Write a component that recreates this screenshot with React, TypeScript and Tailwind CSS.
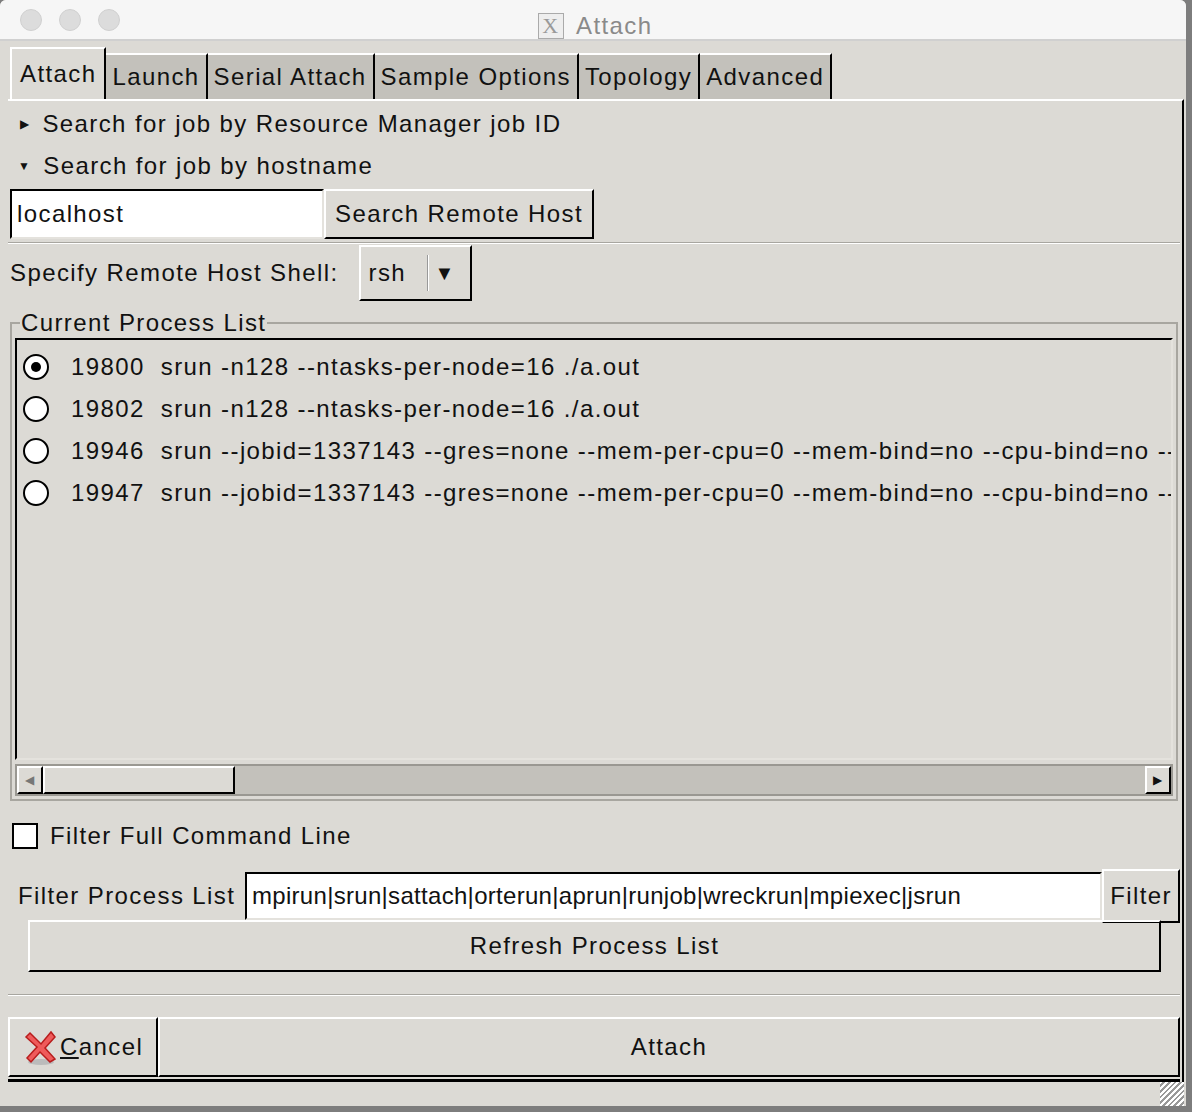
import React from 'react';

const font = { fontFamily: '"Liberation Sans", Arial, sans-serif', letterSpacing: '1.4px' };

const raised = 'border-t-2 border-l-2 border-t-white border-l-white border-b-2 border-r-2 border-b-black border-r-black';
const sunken = 'border-t-2 border-l-2 border-t-black border-l-black border-b-2 border-r-2 border-b-[#e4e2dd] border-r-[#e4e2dd]';

const Tab = ({ label, active }: { label: string; active?: boolean }) => (
  <div
    className={
      active
        ? 'h-[52px] px-2 flex items-center bg-[#dcdad5] border-t-2 border-l-2 border-white border-r-2 border-r-black'
        : 'h-[46px] px-[6px] flex items-center bg-[#c3c1bb] border-t-2 border-white border-r-2 border-r-black self-end'
    }
  >
    {label}
  </div>
);

const rows = [
  ['19800', 'srun -n128 --ntasks-per-node=16 ./a.out', true],
  ['19802', 'srun -n128 --ntasks-per-node=16 ./a.out', false],
  ['19946', 'srun --jobid=1337143 --gres=none --mem-per-cpu=0 --mem-bind=no --cpu-bind=no --cpu-freq=', false],
  ['19947', 'srun --jobid=1337143 --gres=none --mem-per-cpu=0 --mem-bind=no --cpu-bind=no --cpu-freq=', false],
] as const;

export default function App() {
  return (
    <div className="w-[1192px] h-[1112px] bg-[#7d7d7d] text-[24px] text-[#111] overflow-hidden" style={font}>
      <div className="w-[1186px] h-[1106px] bg-[#dcdad5] rounded-t-[6px] overflow-hidden flex flex-col">
        {/* title bar */}
        <div className="h-[46px] bg-[#f6f6f6] border-b-2 border-[#d0d0d0] flex items-center relative">
          <div className="flex gap-[17px] pl-[20px]">
            <span className="w-[22px] h-[22px] rounded-full bg-[#dcdcdc] border border-[#d0d0d0]" />
            <span className="w-[22px] h-[22px] rounded-full bg-[#dcdcdc] border border-[#d0d0d0]" />
            <span className="w-[22px] h-[22px] rounded-full bg-[#dcdcdc] border border-[#d0d0d0]" />
          </div>
          <div className="absolute left-[538px] top-[8px] flex items-center gap-[12px] text-[#8a8a8a]">
            <span className="w-[26px] h-[26px] border border-[#aaa] bg-[#eee] flex items-center justify-center text-[22px] text-[#999] leading-none" style={{ fontFamily: '"Liberation Serif", serif' }}>X</span>
            <span>Attach</span>
          </div>
        </div>

        <div className="flex-1 flex flex-col pl-[8px] pr-[2px] pt-[6px]">
          {/* tabs */}
          <div className="flex h-[52px] items-end pl-[2px]">
            <Tab label="Attach" active />
            <Tab label="Launch" />
            <Tab label="Serial Attach" />
            <Tab label="Sample Options" />
            <Tab label="Topology" />
            <Tab label="Advanced" />
          </div>

          <div className="border-t-2 border-white border-r-2 border-r-black flex flex-col pr-[2px]">
            <div className="h-[42px] flex items-center pl-[12px] gap-[12px] mt-[2px]">
              <span className="text-[12px]">▶</span>
              <span>Search for job by Resource Manager job ID</span>
            </div>
            <div className="h-[42px] flex items-center pl-[10px] gap-[12px]">
              <span className="text-[12px]">▼</span>
              <span>Search for job by hostname</span>
            </div>
            <div className="flex h-[50px] pl-[2px] mt-[2px]">
              <div className={`w-[314px] bg-white ${sunken} flex items-center pl-[5px]`}>localhost</div>
              <div className={`w-[270px] ${raised} flex items-center justify-center`}>Search Remote Host</div>
            </div>
            <div className="h-[2px] bg-[#a8a6a0] border-b border-white mt-[3px]" />
            <div className="flex items-center h-[58px]">
              <span className="pl-[2px]">Specify Remote Host Shell:</span>
              <div className={`ml-[20px] w-[113px] h-[56px] ${raised} flex items-center`}>
                <span className="pl-[8px] w-[66px]">rsh</span>
                <span className="w-[2px] h-[36px] bg-[#999] border-r border-white" />
                <span className="ml-[6px] text-[20px]">▼</span>
              </div>
            </div>

            {/* frame */}
            <div className="mt-[20px] mx-[2px] border-2 border-[#a8a6a0] relative pt-[14px] px-[3px] pb-[3px]">
              <span className="absolute left-[8px] -top-[16px] bg-[#dcdad5] px-[1px] leading-[30px]">Current Process List</span>
              <div className={`h-[422px] ${sunken} bg-[#dcdad5] flex flex-col pt-[6px] overflow-hidden`}>
                {rows.map(([pid, cmd, sel]) => (
                  <div key={pid} className="h-[42px] flex items-center whitespace-nowrap">
                    <span className="ml-[6px] w-[26px] h-[26px] rounded-full border-2 border-black bg-white flex items-center justify-center shrink-0">
                      {sel && <span className="w-[10px] h-[10px] rounded-full bg-black" />}
                    </span>
                    <span className="ml-[22px]">{pid}</span>
                    <span className="ml-[16px]">{cmd}</span>
                  </div>
                ))}
              </div>
              <div className={`mt-[4px] h-[32px] bg-[#c3c1bb] border-2 border-[#9a9892] flex`}>
                <div className={`w-[26px] ${raised} bg-[#dcdad5] flex items-center justify-center text-[12px] text-[#777]`}>◀</div>
                <div className={`w-[192px] ${raised} bg-[#dcdad5]`} />
                <div className="flex-1" />
                <div className={`w-[26px] ${raised} bg-[#dcdad5] flex items-center justify-center text-[12px]`}>▶</div>
              </div>
            </div>

            <div className="flex items-center h-[70px] pl-[4px] gap-[12px]">
              <span className="w-[26px] h-[26px] border-2 border-black bg-white" />
              <span>Filter Full Command Line</span>
            </div>
            <div className="flex h-[50px] items-center">
              <span className="pl-[10px] w-[237px] whitespace-nowrap">Filter Process List</span>
              <div className={`flex-1 h-[48px] bg-white ${sunken} flex items-center pl-[5px] whitespace-nowrap overflow-hidden`} style={{ letterSpacing: '0.3px' }}>
                mpirun|srun|sattach|orterun|aprun|runjob|wreckrun|mpiexec|jsrun
              </div>
              <div className={`w-[78px] h-[54px] ${raised} flex items-center justify-center`}>Filter</div>
            </div>
            <div className="pl-[20px] pr-[19px]">
              <div className={`h-[52px] ${raised} flex items-center justify-center -mt-[1px]`}>Refresh Process List</div>
            </div>
            <div className="h-[2px] bg-[#a8a6a0] border-b border-white mt-[22px]" />
            <div className="flex h-[60px] mt-[21px]">
              <div className={`w-[150px] ${raised} flex items-center pl-[14px] gap-[2px]`}>
                <svg width="34" height="36" viewBox="0 0 34 36">
                  <ellipse cx="17" cy="33" rx="13" ry="3" fill="#bbb" />
                  <path d="M6 4 L17 15 L27 3 L31 8 L21 19 L31 30 L26 33 L16 23 L7 33 L3 29 L13 18 L2 8 Z" fill="#ef5b5b" stroke="#b81d1d" strokeWidth="1.5" />
                </svg>
                <span><span className="underline">C</span>ancel</span>
              </div>
              <div className={`flex-1 ${raised} flex items-center justify-center`}>Attach</div>
            </div>
            <div className="h-[3px] bg-black mt-[2px]" />
          </div>
          <div className="flex-1 flex justify-end items-end">
            <div className="w-[24px] h-[24px] bg-[repeating-linear-gradient(135deg,#fff_0_2px,#999_2px_4px)] bg-white" />
          </div>
        </div>
      </div>
    </div>
  );
}
